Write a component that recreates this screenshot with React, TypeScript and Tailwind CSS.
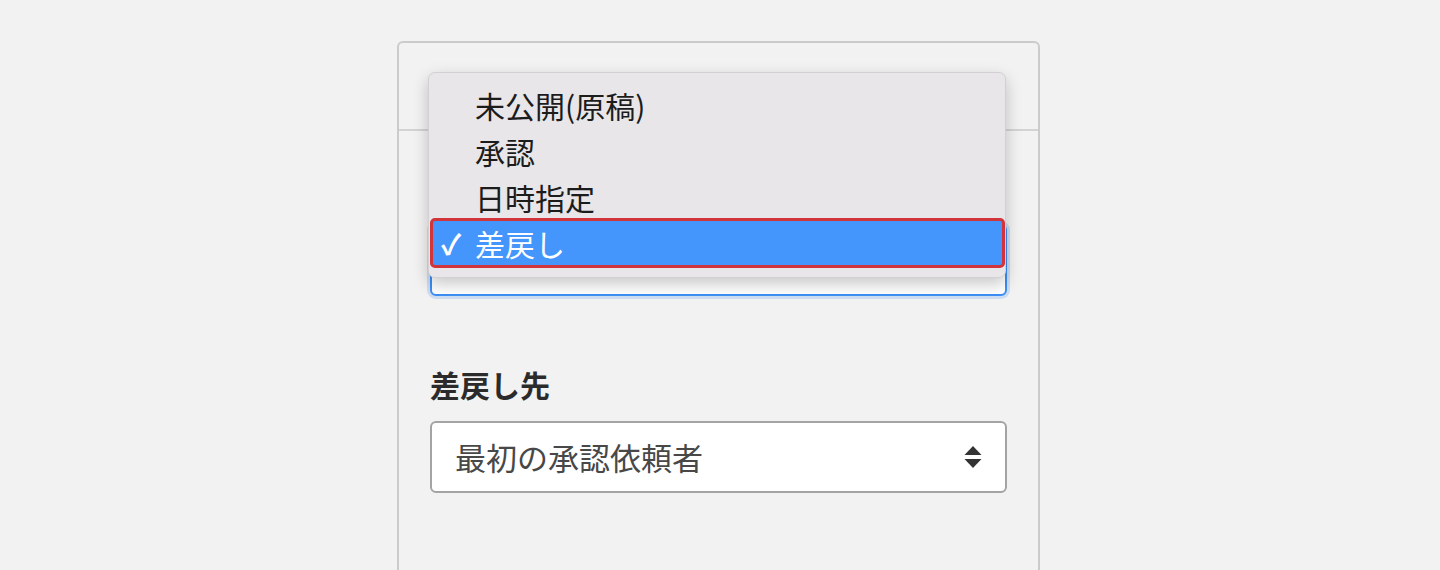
const font = { fontFamily: '"Noto Sans CJK JP", "Noto Sans", sans-serif' };

const statusOptions = ["未公開(原稿)", "承認", "日時指定", "差戻し"];

function SortArrows() {
  return (
    <svg width="18" height="24" viewBox="0 0 18 24" className="shrink-0">
      <path d="M9 1 L17.5 10 L0.5 10 Z" fill="#333" />
      <path d="M0.5 14 L17.5 14 L9 23 Z" fill="#333" />
    </svg>
  );
}

function StatusMenu({ selected }: { selected: string }) {
  return (
    <div className="absolute left-[29px] top-[29px] w-[578px] rounded-[7px] border border-[#d2d0d2] bg-[#e8e6e8] pt-[9px] pb-[11px] shadow-[0_6px_16px_rgba(0,0,0,0.22)]">
      {statusOptions.map((opt) => {
        const active = opt === selected;
        return (
          <div
            key={opt}
            className={
              active
                ? "ml-[1px] flex h-[50px] -my-[2px] items-center rounded-[5px] border-[3px] border-[#d1343b] bg-[#4495fc] pl-[8px] text-[30px] leading-none text-white"
                : "flex h-[46px] items-center pl-[46px] text-[30px] leading-none text-[#1c1c1c]"
            }
          >
            {active ? <span className="w-[34px] text-[28px] font-bold">✓</span> : null}
            <span>{opt}</span>
          </div>
        );
      })}
    </div>
  );
}

export default function App() {
  return (
    <div className="h-[570px] w-[1440px] overflow-hidden bg-[#f2f2f2]" style={font}>
      <div className="ml-[397px] pt-[41px]">
        <div className="relative h-[560px] w-[643px] rounded-t-[6px] border-2 border-b-0 border-[#cbcbcb] bg-[#f2f2f2]">
          <div className="h-[88px] border-b-2 border-[#d3d3d3]" />
          <div className="px-[31px] pt-[38px]">
            {/* label for the status select sits under the open menu */}
            <div className="h-[36px]" />
            <div className="mt-[19px] flex h-[72px] items-center justify-end rounded-[6px] border-2 border-[#3d8ef6] bg-white px-[23px] shadow-[0_0_0_3px_rgba(61,142,246,0.2)]" />

            <label className="mt-[70px] block h-[36px] text-[30px] font-bold leading-[36px] text-[#2b2b2b]">
              差戻し先
            </label>
            <div className="mt-[19px] flex h-[72px] items-center justify-between rounded-[6px] border-2 border-[#a4a4a4] bg-white pl-[23px] pr-[23px]">
              <span className="text-[31px] text-[#484848]">最初の承認依頼者</span>
              <SortArrows />
            </div>
          </div>

          <StatusMenu selected="差戻し" />
        </div>
      </div>
    </div>
  );
}
